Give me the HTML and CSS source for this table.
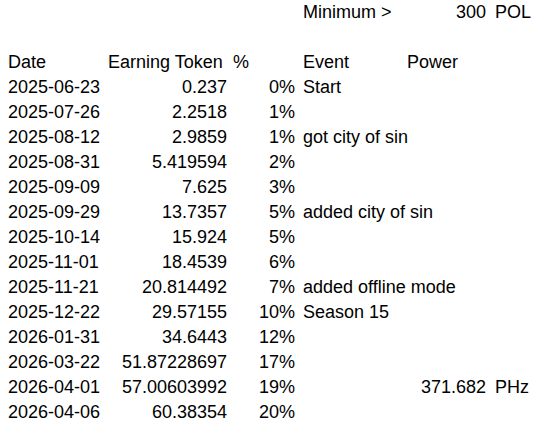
FILE: index.html
```html
<!DOCTYPE html>
<html lang="en">
<head>
  <meta charset="UTF-8">
  <title>Earnings</title>
  <link rel="stylesheet" href="styles.css">
</head>
<body>
  <table class="sheet">
    <colgroup>
      <col class="col-date">
      <col class="col-token">
      <col class="col-pct">
      <col class="col-event">
      <col class="col-power">
      <col class="col-unit">
    </colgroup>
    <tr><td></td><td></td><td></td><td>Minimum &gt;</td><td class="num">300</td><td class="unit">POL</td></tr>
    <tr><td></td><td></td><td></td><td></td><td></td><td></td></tr>
    <tr><td>Date</td><td>Earning Token</td><td>%</td><td>Event</td><td>Power</td><td></td></tr>
    <tr><td>2025-06-23</td><td class="num">0.237</td><td class="num">0%</td><td>Start</td><td></td><td></td></tr>
    <tr><td>2025-07-26</td><td class="num">2.2518</td><td class="num">1%</td><td></td><td></td><td></td></tr>
    <tr><td>2025-08-12</td><td class="num">2.9859</td><td class="num">1%</td><td>got city of sin</td><td></td><td></td></tr>
    <tr><td>2025-08-31</td><td class="num">5.419594</td><td class="num">2%</td><td></td><td></td><td></td></tr>
    <tr><td>2025-09-09</td><td class="num">7.625</td><td class="num">3%</td><td></td><td></td><td></td></tr>
    <tr><td>2025-09-29</td><td class="num">13.7357</td><td class="num">5%</td><td>added city of sin</td><td></td><td></td></tr>
    <tr><td>2025-10-14</td><td class="num">15.924</td><td class="num">5%</td><td></td><td></td><td></td></tr>
    <tr><td>2025-11-01</td><td class="num">18.4539</td><td class="num">6%</td><td></td><td></td><td></td></tr>
    <tr><td>2025-11-21</td><td class="num">20.814492</td><td class="num">7%</td><td>added offline mode</td><td></td><td></td></tr>
    <tr><td>2025-12-22</td><td class="num">29.57155</td><td class="num">10%</td><td>Season 15</td><td></td><td></td></tr>
    <tr><td>2026-01-31</td><td class="num">34.6443</td><td class="num">12%</td><td></td><td></td><td></td></tr>
    <tr><td>2026-03-22</td><td class="num">51.87228697</td><td class="num">17%</td><td></td><td></td><td></td></tr>
    <tr><td>2026-04-01</td><td class="num">57.00603992</td><td class="num">19%</td><td></td><td class="num">371.682</td><td class="unit">PHz</td></tr>
    <tr><td>2026-04-06</td><td class="num">60.38354</td><td class="num">20%</td><td></td><td></td><td></td></tr>
  </table>
</body>
</html>
```

FILE: styles.css
```css
* {margin: 0; padding: 0; box-sizing: border-box;}
body {background-color: #fff; color: #000; font-family: "Liberation Sans", Arial, sans-serif; font-size: 18px;}
.sheet {border-collapse: collapse; table-layout: fixed; margin-left: 5px; width: 555px;}
.sheet td {height: 25px; line-height: 25px; padding: 0 3px; white-space: nowrap; overflow: visible; vertical-align: middle;}
.sheet td:nth-child(4) {padding-left: 5px;}
.col-date {width: 100px;}
.col-token {width: 125px;}
.col-pct {width: 68px;}
.col-event {width: 106px;}
.col-power {width: 85px;}
.col-unit {width: 71px;}
.num {text-align: right;}
.sheet td.unit {padding-left: 6px;}
```
